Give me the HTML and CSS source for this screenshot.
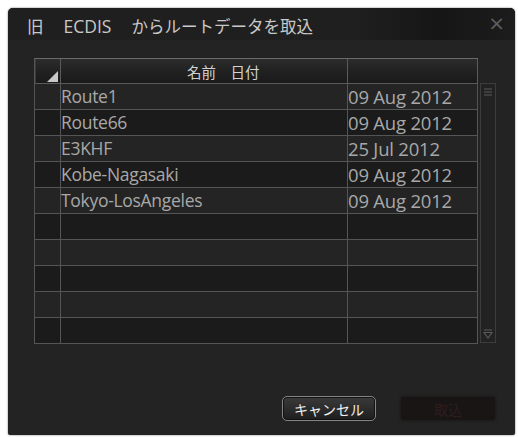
FILE: index.html
```html
<!DOCTYPE html>
<html lang="ja">
<head>
<meta charset="utf-8">
<title>旧 ECDIS からルートデータを取込</title>
<link rel="stylesheet" href="styles.css">
</head>
<body>
<div class="dialog">
  <div class="titlebar">
    <span class="title"><span class="t1">旧</span><span class="t2">ECDIS</span><span class="t3">からルートデータを取込</span></span>
    <span class="close">×</span>
  </div>
  <div class="content">
    <div class="tablewrap">
      <div class="grid">
        <div class="hcell corner"><span class="tri"></span></div>
        <div class="hcell hname">名前　日付</div>
        <div class="hcell hdate"></div>

        <div class="cell c0 odd"></div><div class="cell name odd">Route1</div><div class="cell date odd">09 Aug 2012</div>
        <div class="cell c0 even"></div><div class="cell name even">Route66</div><div class="cell date even">09 Aug 2012</div>
        <div class="cell c0 odd"></div><div class="cell name odd">E3KHF</div><div class="cell date odd">25 Jul 2012</div>
        <div class="cell c0 even"></div><div class="cell name even">Kobe-Nagasaki</div><div class="cell date even">09 Aug 2012</div>
        <div class="cell c0 odd"></div><div class="cell name odd">Tokyo-LosAngeles</div><div class="cell date odd">09 Aug 2012</div>
        <div class="cell c0 even"></div><div class="cell name even"></div><div class="cell date even"></div>
        <div class="cell c0 odd"></div><div class="cell name odd"></div><div class="cell date odd"></div>
        <div class="cell c0 even"></div><div class="cell name even"></div><div class="cell date even"></div>
        <div class="cell c0 odd"></div><div class="cell name odd"></div><div class="cell date odd"></div>
        <div class="cell c0 even"></div><div class="cell name even"></div><div class="cell date even"></div>
      </div>
      <div class="scrollbar">
        <svg class="sb-top" width="14" height="12" viewBox="0 0 14 12"><path d="M3 3h8M3 6h8M3 9h8" stroke="#5a5a5a" stroke-width="1.2" fill="none"/></svg>
        <svg class="sb-bot" width="14" height="12" viewBox="0 0 14 12"><path d="M3 2h8M3 4.5h8L7 10Z" stroke="#5a5a5a" stroke-width="1.1" fill="none"/></svg>
      </div>
    </div>
    <div class="footer">
      <button class="btn cancel">キャンセル</button>
      <button class="btn import" disabled>取込</button>
    </div>
  </div>
</div>
</body>
</html>
```

FILE: styles.css
```css
html, body {
  margin: 0;
  padding: 0;
  background: #ffffff;
}
body {
  width: 518px;
  height: 437px;
  overflow: hidden;
  font-family: "Open Sans", "Noto Sans CJK JP", sans-serif;
}
.dialog {
  margin: 8px 0 0 8px;
  width: 507px;
  height: 427px;
  background: #232323;
  border-radius: 5px 5px 2px 2px;
  box-shadow: 0 0 2px rgba(0,0,0,0.6);
  display: flex;
  flex-direction: column;
  overflow: hidden;
}
.titlebar {
  height: 32px;
  flex: none;
  background: linear-gradient(90deg, #1f1f1f 0%, #1f1f1f 68%, #161616 85%, #1c1c1c 100%);
  display: flex;
  align-items: center;
  justify-content: space-between;
  padding: 3px 10px 0 19px;
  box-sizing: border-box;
  color: #c9c9c9;
}
.title {
  font-size: 16.5px;
  display: flex;
  align-items: center;
}
.t1 { margin-right: 20px; }
.t2 { margin-right: 20px; font-size: 17.5px; }
.close {
  color: #5e5e5e;
  font-size: 20px;
  line-height: 1;
  margin-top: -6px;
  font-family: "DejaVu Sans", sans-serif;
}
.content {
  flex: 1;
  display: flex;
  flex-direction: column;
}
.tablewrap {
  margin: 18px 0 0 26px;
  display: flex;
  align-items: flex-start;
  gap: 2px;
}
.grid {
  display: grid;
  grid-template-columns: 26px 287px 130px;
  grid-template-rows: 25px repeat(10, 26px);
  border-left: 1px solid #555;
  border-top: 1px solid #6a6a6a;
  box-sizing: border-box;
  width: 444px;
}
.hcell {
  background: linear-gradient(180deg, #2c2c2c 0%, #222 45%, #1a1a1a 100%);
  border-right: 1px solid #5a5a5a;
  border-bottom: 1px solid #5a5a5a;
  color: #d2d2d2;
  font-size: 14.5px;
  line-height: 24px;
  font-family: "Noto Sans CJK JP", sans-serif;
  box-sizing: border-box;
}
.corner {
  position: relative;
  border-left: 1px solid #3a3a3a;
}
.tri {
  position: absolute;
  right: 2px;
  bottom: 1px;
  width: 0;
  height: 0;
  border-left: 11px solid transparent;
  border-bottom: 11px solid #c8c8c8;
}
.hname {
  padding-left: 126px;
  padding-top: 1px;
  white-space: pre;
}
.cell {
  border-right: 1px solid #555;
  border-bottom: 1px solid #555;
  box-sizing: border-box;
  color: #a8a8a8;
  font-size: 17.5px;
  line-height: 25px;
  white-space: nowrap;
  overflow: hidden;
  letter-spacing: -0.3px;
}
.odd { background: #242424; }
.even { background: #1b1b1b; }
.name { padding-left: 0; }
.date { font-size: 18.5px; letter-spacing: -0.2px; }
.scrollbar {
  margin-top: 25px;
  width: 16px;
  height: 260px;
  box-sizing: border-box;
  border: 1px solid #3c3c3c;
  background: #222;
  display: flex;
  flex-direction: column;
  justify-content: space-between;
  align-items: center;
  padding: 2px 0 2px;
}
.sb-top, .sb-bot { display: block; }
.footer {
  margin-top: auto;
  display: flex;
  justify-content: flex-end;
  gap: 25px;
  padding: 0 20px 14px 0;
}
.btn {
  width: 94px;
  height: 25px;
  box-sizing: border-box;
  font-family: "Noto Sans CJK JP", sans-serif;
  font-size: 14px;
  padding: 0;
}
.cancel {
  border: 1px solid #858585;
  border-radius: 5px;
  background: linear-gradient(180deg, #3a3a3a 0%, #1e1e1e 100%);
  color: #f0f0f0;
  box-shadow: inset 0 0 0 1px #111;
}
.import {
  border: none;
  border-radius: 2px;
  background: #191515;
  color: #2e1d1d;
  height: 23px;
  margin-top: 1px;
  box-shadow: 0 0 3px #121212;
}
```
